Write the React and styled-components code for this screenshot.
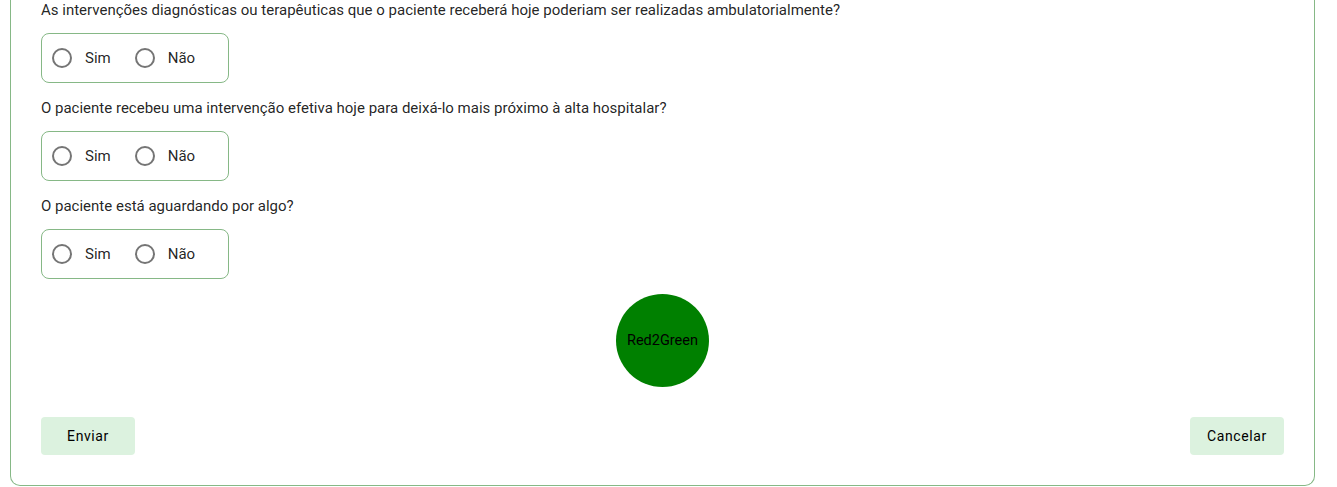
import React, { useState } from 'react'
import styled, { createGlobalStyle } from 'styled-components'

const GlobalStyle = createGlobalStyle`
  html, body {
    margin: 0;
    padding: 0;
    background: #fff;
    font-family: Roboto, "Liberation Sans", Arial, sans-serif;
    color: rgba(0, 0, 0, 0.87);
  }
`

const Card = styled.div`
  box-sizing: border-box;
  width: 1305px;
  margin-left: 10px;
  border: 1px solid #86b886;
  border-top: none;
  border-radius: 0 0 10px 10px;
  padding: 0 30px 30px;
  display: flex;
  flex-direction: column;
`

const Question = styled.p`
  margin: 0 0 13px;
  font-size: 15px;
  line-height: 20px;
`

const Group = styled.div`
  box-sizing: border-box;
  width: 188px;
  height: 50px;
  margin-bottom: 15px;
  border: 1px solid #86b886;
  border-radius: 8px;
  padding-left: 10px;
  display: flex;
  align-items: center;
`

const Option = styled.label`
  display: flex;
  align-items: center;
  margin-right: 24px;
  cursor: pointer;
  font-size: 15px;
  line-height: 24px;
`

const Circle = styled.span`
  box-sizing: border-box;
  width: 20px;
  height: 20px;
  border-radius: 50%;
  border: 2px solid ${p => (p.$on ? '#2e7d32' : '#757575')};
  margin-right: 13px;
  display: flex;
  align-items: center;
  justify-content: center;
  &::after {
    content: '';
    width: 10px;
    height: 10px;
    border-radius: 50%;
    background: #2e7d32;
    display: ${p => (p.$on ? 'block' : 'none')};
  }
`

const Badge = styled.div`
  align-self: center;
  width: 93px;
  height: 93px;
  border-radius: 50%;
  background: #008000;
  color: #000;
  font-size: 14.5px;
  display: flex;
  align-items: center;
  justify-content: center;
  margin: 0 0 30px;
`

const Actions = styled.div`
  display: flex;
  justify-content: space-between;
`

const Button = styled.button`
  width: 94px;
  height: 38px;
  border: none;
  border-radius: 4px;
  background: #dcf2df;
  color: #000;
  font-family: Roboto, "Liberation Sans", Arial, sans-serif;
  font-size: 14px;
  font-weight: 400;
  letter-spacing: 0.6px;
  cursor: pointer;
`

const questions = [
  'As intervenções diagnósticas ou terapêuticas que o paciente receberá hoje poderiam ser realizadas ambulatorialmente?',
  'O paciente recebeu uma intervenção efetiva hoje para deixá-lo mais próximo à alta hospitalar?',
  'O paciente está aguardando por algo?',
]

export default function App() {
  const [answers, setAnswers] = useState({})

  return (
    <>
      <GlobalStyle />
      <Card>
        {questions.map((q, i) => (
          <React.Fragment key={i}>
            <Question>{q}</Question>
            <Group>
              {['Sim', 'Não'].map(opt => (
                <Option key={opt} onClick={() => setAnswers({ ...answers, [i]: opt })}>
                  <Circle $on={answers[i] === opt} />
                  {opt}
                </Option>
              ))}
            </Group>
          </React.Fragment>
        ))}
        <Badge>Red2Green</Badge>
        <Actions>
          <Button>Enviar</Button>
          <Button>Cancelar</Button>
        </Actions>
      </Card>
    </>
  )
}
